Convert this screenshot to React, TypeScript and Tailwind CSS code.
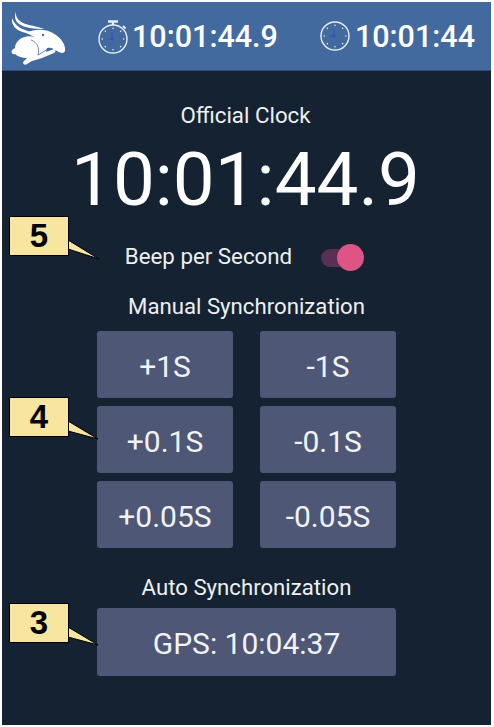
function Rabbit() {
  return (
    <svg className="absolute left-0 top-[3px] w-[75px] h-[65px]" viewBox="0 0 75 65" fill="white">
      <path d="M14 7C13 13 18 18 27 20C32 21 37 22 42 24C33 24 22 23 17 19C13 16 12 11 14 7Z" />
      <path d="M10 13C9 20 14 26 24 28L30 27C20 25 13 21 10 13Z" />
      <path d="M24 28C34 23 46 24 54 30C60 34 64 41 63 46C62 49 58 48 55 46C51 43 48 42 45 43L36 34C32 31 28 30 24 28Z" />
      <path d="M20 33C28 29 40 32 46 39L44 47L52 44C54 44 54 47 52 48L40 53L30 56L25 59C22 61 20 58 22 56L25 53C20 53 15 51 13 49C10 50 9 47 10 45L13 43C13 39 16 35 20 33Z" />
      <path d="M29 35C35 37 38 43 36 50" fill="none" stroke="#436a9f" strokeWidth="0.8" />
      <path d="M36 50L46 44" fill="none" stroke="#436a9f" strokeWidth="0.8" />
      <circle cx="41" cy="30" r="1.2" fill="#436a9f" />
    </svg>
  )
}

function ClockDial({ stopwatch }: { stopwatch?: boolean }) {
  const ticks = [0, 45, 90, 135, 180, 225, 270, 315]
  const cy = stopwatch ? 22 : 16
  return (
    <svg className={`w-[32px] shrink-0 ${stopwatch ? 'h-[38px]' : 'h-[32px]'}`} viewBox={stopwatch ? '0 0 32 38' : '0 0 32 32'} fill="none">
      <circle cx="16" cy={cy} r="14" stroke="#e8edf5" strokeWidth="1.4" />
      {ticks.map((t) => (
        <circle
          key={t}
          cx={16 + 10.8 * Math.sin((t * Math.PI) / 180)}
          cy={cy - 10.8 * Math.cos((t * Math.PI) / 180)}
          r="0.8"
          fill="#dfe6f0"
        />
      ))}
      <path d={`M15 ${cy - 7}V${cy}h-4`} stroke="#2f55c4" strokeWidth="1" />
      <circle cx="15" cy={cy} r="1.6" fill="#2f55c4" />
      {stopwatch && (
        <>
          <path d="M11 4.5h10M16 4.5v3.5" stroke="#e8edf5" strokeWidth="2.4" />
          <path d="M26 9l2.5 2.5" stroke="#e8edf5" strokeWidth="2" />
        </>
      )}
    </svg>
  )
}

function SyncButton({ label, className }: { label: string; className?: string }) {
  return (
    <div className={`h-[67px] pt-[3px] bg-[#4e5775] rounded-[3px] flex items-center justify-center text-[30px] text-[#f2f3f6] ${className ?? ''}`}>
      {label}
    </div>
  )
}

function Callout({ n, top, tip }: { n: string; top: string; tip: string }) {
  return (
    <div className={`absolute left-[9px] w-[91px] h-[44px] ${top}`}>
      <svg className="absolute left-0 top-0 w-[91px] h-[44px]" viewBox="0 0 91 44" fill="none">
        <path d={tip} fill="#f8e5a0" stroke="black" strokeWidth="1" />
      </svg>
      <div className="absolute left-0 top-0 w-[60px] h-[40px] bg-[#f8e5a0] border border-black flex items-center justify-center font-['Liberation_Sans',sans-serif] font-bold text-[33px] text-black">
        {n}
      </div>
    </div>
  )
}

export default function App() {
  const rows = [
    ['+1S', '-1S'],
    ['+0.1S', '-0.1S'],
    ['+0.05S', '-0.05S'],
  ]

  return (
    <div className="relative w-[494px] h-[727px] bg-white pl-[2px] pr-[3px] pt-[2px] pb-[2px] font-['Roboto',sans-serif]">
      <div className="h-full bg-[#142232] flex flex-col items-center text-[#eef0f3]">
        {/* Top bar */}
        <div className="relative w-full h-[69px] shrink-0 bg-[#436a9f] border-b border-[#2f4e78] flex items-center pl-[95px] text-white">
          <Rabbit />
          <div className="flex items-center">
            <ClockDial stopwatch />
            <span className="ml-[3px] mt-[3px] text-[30.5px] font-medium leading-none">10:01:44.9</span>
          </div>
          <div className="ml-[41px] flex items-center">
            <ClockDial />
            <span className="ml-[4px] mt-[3px] text-[30.5px] font-medium leading-none">10:01:44</span>
          </div>
        </div>

        <p className="mt-[30px] mr-[2px] text-[22.3px] leading-[28px]">Official Clock</p>
        <p className="mt-[9px] mr-[2px] text-[74.5px] leading-[84px] text-white">10:01:44.9</p>

        {/* Beep toggle */}
        <div className="mt-[20px] mr-[4px] h-[30px] flex items-center">
          <span className="text-[22.3px]">Beep per Second</span>
          <div className="relative ml-[29px] w-[43px] h-[27px]">
            <div className="absolute left-0 top-[5px] w-[34px] h-[18px] rounded-full bg-[#5a2f55]" />
            <div className="absolute right-0 top-0 w-[27px] h-[27px] rounded-full bg-[#de5585]" />
          </div>
        </div>

        <p className="mt-[20px] text-[22.2px] leading-[28px]">Manual Synchronization</p>

        {/* Manual buttons */}
        <div className="mt-[11px] grid grid-cols-2 gap-x-[27px] gap-y-[8px] w-[299px]">
          {rows.map(([a, b]) => [<SyncButton key={a} label={a} />, <SyncButton key={b} label={b} />])}
        </div>

        <p className="mt-[25px] text-[22.2px] leading-[28px]">Auto Synchronization</p>
        <SyncButton label="GPS: 10:04:37" className="mt-[7px] w-[299px] h-[68px]" />
      </div>

      {/* Numbered callouts */}
      <Callout n="5" top="top-[216px]" tip="M59 24L90 43L59 33Z" />
      <Callout n="4" top="top-[397px]" tip="M59 24L89 42L59 34Z" />
      <Callout n="3" top="top-[603px]" tip="M59 24L89 42L59 34Z" />
    </div>
  )
}
